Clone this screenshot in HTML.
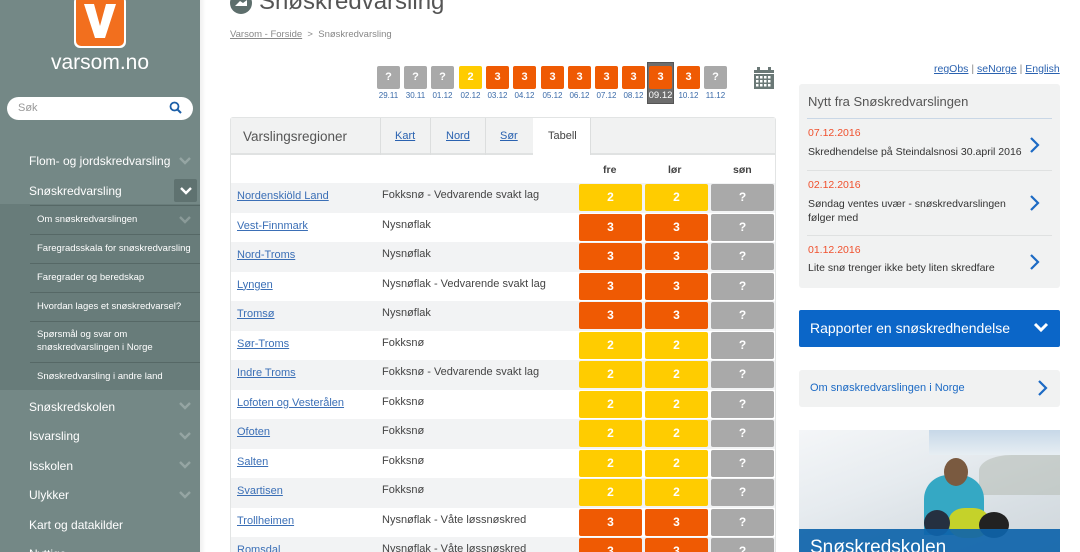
<!DOCTYPE html>
<html style="overflow:hidden;width:1080px;height:552px"><head><meta charset="utf-8">
<style>
*{box-sizing:border-box;margin:0;padding:0}
html,body{overflow:hidden}
body{width:1080px;height:552px;background:#fff;font-family:"Liberation Sans",sans-serif;position:relative;color:#333}
.a{position:absolute}
#side{left:0;top:0;width:200px;height:552px;background:#748886;}
.nav{position:absolute;left:29px;color:#fff;font-size:12px}
.chev{position:absolute;left:178px;width:14px;height:10px}
.sub{position:absolute;left:37px;color:#fff;font-size:9.5px;line-height:13px}
.subl{position:absolute;left:30px;width:170px;height:1px;background:#566866}
.db{position:absolute;top:66px;width:23px;height:23px;border-radius:2px;color:#fff;font-weight:bold;font-size:11px;text-align:center;line-height:23px}
.dl{position:absolute;top:91px;font-size:8px;color:#3a6aa8;width:27px;text-align:center}
.g{background:#a9a9a9}.y{background:#ffcc00}.o{background:#ef5a03}
.row{position:absolute;left:231px;width:544px;height:29.5px}
.row .r{position:absolute;left:6px;top:7px;font-size:11px;color:#3b6fb6;text-decoration:underline}
.row .p{position:absolute;left:151px;top:6px;font-size:11px;color:#444}
.row .c{position:absolute;top:1px;width:63px;height:27px;border-radius:2px;color:#fff;font-weight:bold;font-size:12px;text-align:center;line-height:27px}
.news{position:absolute;left:808px;font-size:10.5px;color:#333}
.nd{color:#f0502d}
</style></head><body>
<div id="side" class="a">
  <div class="a" style="left:74px;top:-4px;width:52px;height:52px;background:#fff;border-radius:6px"></div>
  <div class="a" style="left:76px;top:-4px;width:48px;height:50px;background:#f26f1e;border-radius:5px"></div>
  <svg class="a" style="left:82px;top:2px" width="36" height="38" viewBox="0 0 36 38"><path d="M2 2h10l6 22 6-22h10L23 36h-10z" fill="#fff"/></svg>
  <div class="a" style="left:0;width:200px;top:51px;text-align:center;color:#fff;font-size:21px">varsom.no</div>
  <div class="a" style="left:7px;top:97px;width:186px;height:23px;background:#fff;border-radius:12px"></div>
  <div class="a" style="left:18px;top:102px;font-size:11px;color:#999">Søk</div>
  <svg class="a" style="left:169px;top:101px" width="13" height="13" viewBox="0 0 13 13"><circle cx="5.5" cy="5.5" r="4" fill="none" stroke="#1c5fa8" stroke-width="1.8"/><path d="M8.5 8.5l3.5 3.5" stroke="#1c5fa8" stroke-width="2"/></svg>
  <div class="nav" style="top:154px">Flom- og jordskredvarsling</div>
  <svg class="chev" style="top:156px" viewBox="0 0 14 10"><path d="M2 2l5 5 5-5" stroke="#95a5a3" stroke-width="2.4" fill="none"/></svg>
  <div class="nav" style="top:184px">Snøskredvarsling</div>
  <div class="a" style="left:174px;top:179px;width:23px;height:23px;background:#5f7270;border-radius:2px"></div>
  <svg class="chev" style="top:186px;left:179px" viewBox="0 0 14 10"><path d="M2 2l5 5 5-5" stroke="#fff" stroke-width="2.4" fill="none"/></svg>
  <div class="a" style="left:0;top:204px;width:200px;height:186px;background:#687c7a"></div>
  <div class="subl" style="top:205px"></div>
  <div class="sub" style="top:213px">Om snøskredvarslingen</div>
  <svg class="chev" style="top:215px" viewBox="0 0 14 10"><path d="M2 2l5 5 5-5" stroke="#8a9a98" stroke-width="2.4" fill="none"/></svg>
  <div class="subl" style="top:234px"></div>
  <div class="sub" style="top:242px">Faregradsskala for snøskredvarsling</div>
  <div class="subl" style="top:263px"></div>
  <div class="sub" style="top:271px">Faregrader og beredskap</div>
  <div class="subl" style="top:292px"></div>
  <div class="sub" style="top:300px">Hvordan lages et snøskredvarsel?</div>
  <div class="subl" style="top:321px"></div>
  <div class="sub" style="top:328px">Spørsmål og svar om<br>snøskredvarslingen i Norge</div>
  <div class="subl" style="top:362px"></div>
  <div class="sub" style="top:370px">Snøskredvarsling i andre land</div>
  <div class="nav" style="top:400px">Snøskredskolen</div>
  <svg class="chev" style="top:401px" viewBox="0 0 14 10"><path d="M2 2l5 5 5-5" stroke="#95a5a3" stroke-width="2.4" fill="none"/></svg>
  <div class="nav" style="top:429px">Isvarsling</div>
  <svg class="chev" style="top:431px" viewBox="0 0 14 10"><path d="M2 2l5 5 5-5" stroke="#95a5a3" stroke-width="2.4" fill="none"/></svg>
  <div class="nav" style="top:459px">Isskolen</div>
  <svg class="chev" style="top:460px" viewBox="0 0 14 10"><path d="M2 2l5 5 5-5" stroke="#95a5a3" stroke-width="2.4" fill="none"/></svg>
  <div class="nav" style="top:488px">Ulykker</div>
  <svg class="chev" style="top:490px" viewBox="0 0 14 10"><path d="M2 2l5 5 5-5" stroke="#95a5a3" stroke-width="2.4" fill="none"/></svg>
  <div class="nav" style="top:518px">Kart og datakilder</div>
  <div class="nav" style="top:547px">Nyttige</div>
</div>
<div class="a" style="left:200px;top:0;width:6px;height:552px;background:linear-gradient(to right,rgba(0,0,0,.06),rgba(0,0,0,0))"></div>

<svg class="a" style="left:230px;top:-8px" width="22" height="22" viewBox="0 0 22 22"><circle cx="11" cy="11" r="11" fill="#5d6e6c"/><path d="M5 14l5-5 3 2 4-3v6z" fill="#fff"/></svg>
<div class="a" style="left:259px;top:-12px;font-size:24px;color:#555">Snøskredvarsling</div>
<div class="a" style="left:230px;top:29px;font-size:9.5px;color:#888"><span style="text-decoration:underline">Varsom - Forside</span> &nbsp;&gt;&nbsp; Snøskredvarsling</div>

<div class="a" style="left:647px;top:62px;width:27px;height:42px;background:#6d6d6d;border:1px solid #555"></div>
<div class="db g" style="left:377px">?</div><div class="dl" style="left:375px">29.11</div>
<div class="db g" style="left:404px">?</div><div class="dl" style="left:402px">30.11</div>
<div class="db g" style="left:431px">?</div><div class="dl" style="left:429px">01.12</div>
<div class="db y" style="left:459px">2</div><div class="dl" style="left:457px">02.12</div>
<div class="db o" style="left:486px">3</div><div class="dl" style="left:484px">03.12</div>
<div class="db o" style="left:513px">3</div><div class="dl" style="left:511px">04.12</div>
<div class="db o" style="left:541px">3</div><div class="dl" style="left:539px">05.12</div>
<div class="db o" style="left:568px">3</div><div class="dl" style="left:566px">06.12</div>
<div class="db o" style="left:595px">3</div><div class="dl" style="left:593px">07.12</div>
<div class="db o" style="left:622px">3</div><div class="dl" style="left:620px">08.12</div>
<div class="db o" style="left:649px">3</div><div class="dl" style="left:647px;color:#fff;font-size:9.5px;top:90px">09.12</div>
<div class="db o" style="left:677px">3</div><div class="dl" style="left:675px">10.12</div>
<div class="db g" style="left:704px">?</div><div class="dl" style="left:702px">11.12</div>
<svg class="a" style="left:754px;top:67px" width="20" height="22" viewBox="0 0 20 22"><rect x="0" y="3" width="20" height="19" fill="#6a7876"/><rect x="3" y="0" width="3" height="5" fill="#6a7876"/><rect x="14" y="0" width="3" height="5" fill="#6a7876"/><rect x="0" y="6" width="20" height="1" fill="#fff"/><g fill="#fff"><rect x="2" y="9" width="2.5" height="2.5"/><rect x="6" y="9" width="2.5" height="2.5"/><rect x="10" y="9" width="2.5" height="2.5"/><rect x="14" y="9" width="2.5" height="2.5"/><rect x="2" y="13" width="2.5" height="2.5"/><rect x="6" y="13" width="2.5" height="2.5"/><rect x="10" y="13" width="2.5" height="2.5"/><rect x="14" y="13" width="2.5" height="2.5"/><rect x="2" y="17" width="2.5" height="2.5"/><rect x="6" y="17" width="2.5" height="2.5"/><rect x="10" y="17" width="2.5" height="2.5"/><rect x="14" y="17" width="2.5" height="2.5"/></g></svg>

<div class="a" style="left:230px;top:117px;width:546px;height:435px;border:1px solid #e2e4e4;border-bottom:none;border-radius:3px 3px 0 0"></div>
<div class="a" style="left:231px;top:118px;width:544px;height:37px;background:#f1f2f2;border-bottom:2px solid #e0e2e2"></div>
<div class="a" style="left:243px;top:129px;font-size:13.5px;color:#555">Varslingsregioner</div>
<div class="a" style="left:380px;top:118px;width:1px;height:37px;background:#dcdede"></div>
<div class="a" style="left:430px;top:118px;width:1px;height:37px;background:#dcdede"></div>
<div class="a" style="left:485px;top:118px;width:1px;height:37px;background:#dcdede"></div>
<div class="a" style="left:533px;top:118px;width:57px;height:37px;background:#fff"></div>
<div class="a" style="left:590px;top:118px;width:1px;height:37px;background:#dcdede"></div>
<div class="a" style="left:395px;top:130px;font-size:11px;color:#2a62b0;text-decoration:underline">Kart</div>
<div class="a" style="left:446px;top:130px;font-size:11px;color:#2a62b0;text-decoration:underline">Nord</div>
<div class="a" style="left:500px;top:130px;font-size:11px;color:#2a62b0;text-decoration:underline">Sør</div>
<div class="a" style="left:548px;top:130px;font-size:11px;color:#444">Tabell</div>
<div class="a" style="left:603px;top:164px;font-size:10.5px;font-weight:bold;color:#444">fre</div>
<div class="a" style="left:668px;top:164px;font-size:10.5px;font-weight:bold;color:#444">lør</div>
<div class="a" style="left:733px;top:164px;font-size:10.5px;font-weight:bold;color:#444">søn</div>

<div class="row" style="top:183px;background:#f2f3f4"><span class="r">Nordenskiöld Land</span><span class="p">Fokksnø - Vedvarende svakt lag</span><div class="c y" style="left:348px">2</div><div class="c y" style="left:414px">2</div><div class="c g" style="left:480px">?</div></div>
<div class="row" style="top:212.5px"><span class="r">Vest-Finnmark</span><span class="p">Nysnøflak</span><div class="c o" style="left:348px">3</div><div class="c o" style="left:414px">3</div><div class="c g" style="left:480px">?</div></div>
<div class="row" style="top:242px;background:#f2f3f4"><span class="r">Nord-Troms</span><span class="p">Nysnøflak</span><div class="c o" style="left:348px">3</div><div class="c o" style="left:414px">3</div><div class="c g" style="left:480px">?</div></div>
<div class="row" style="top:271.5px"><span class="r">Lyngen</span><span class="p">Nysnøflak - Vedvarende svakt lag</span><div class="c o" style="left:348px">3</div><div class="c o" style="left:414px">3</div><div class="c g" style="left:480px">?</div></div>
<div class="row" style="top:301px;background:#f2f3f4"><span class="r">Tromsø</span><span class="p">Nysnøflak</span><div class="c o" style="left:348px">3</div><div class="c o" style="left:414px">3</div><div class="c g" style="left:480px">?</div></div>
<div class="row" style="top:330.5px"><span class="r">Sør-Troms</span><span class="p">Fokksnø</span><div class="c y" style="left:348px">2</div><div class="c y" style="left:414px">2</div><div class="c g" style="left:480px">?</div></div>
<div class="row" style="top:360px;background:#f2f3f4"><span class="r">Indre Troms</span><span class="p">Fokksnø - Vedvarende svakt lag</span><div class="c y" style="left:348px">2</div><div class="c y" style="left:414px">2</div><div class="c g" style="left:480px">?</div></div>
<div class="row" style="top:389.5px"><span class="r">Lofoten og Vesterålen</span><span class="p">Fokksnø</span><div class="c y" style="left:348px">2</div><div class="c y" style="left:414px">2</div><div class="c g" style="left:480px">?</div></div>
<div class="row" style="top:419px;background:#f2f3f4"><span class="r">Ofoten</span><span class="p">Fokksnø</span><div class="c y" style="left:348px">2</div><div class="c y" style="left:414px">2</div><div class="c g" style="left:480px">?</div></div>
<div class="row" style="top:448.5px"><span class="r">Salten</span><span class="p">Fokksnø</span><div class="c y" style="left:348px">2</div><div class="c y" style="left:414px">2</div><div class="c g" style="left:480px">?</div></div>
<div class="row" style="top:478px;background:#f2f3f4"><span class="r">Svartisen</span><span class="p">Fokksnø</span><div class="c y" style="left:348px">2</div><div class="c y" style="left:414px">2</div><div class="c g" style="left:480px">?</div></div>
<div class="row" style="top:507.5px"><span class="r">Trollheimen</span><span class="p">Nysnøflak - Våte løssnøskred</span><div class="c o" style="left:348px">3</div><div class="c o" style="left:414px">3</div><div class="c g" style="left:480px">?</div></div>
<div class="row" style="top:537px;height:15px;overflow:hidden;background:#f2f3f4"><span class="r">Romsdal</span><span class="p">Nysnøflak - Våte løssnøskred</span><div class="c o" style="left:348px">3</div><div class="c o" style="left:414px">3</div><div class="c g" style="left:480px">?</div></div>

<div class="a" style="left:934px;top:63px;font-size:10.5px;color:#2a62b0"><u>regObs</u> <span style="color:#888">|</span> <u>seNorge</u> <span style="color:#888">|</span> <u>English</u></div>
<div class="a" style="left:799px;top:84px;width:261px;height:204px;background:#f1f2f2;border-radius:3px"></div>
<div class="a" style="left:808px;top:94px;font-size:13px;color:#555">Nytt fra Snøskredvarslingen</div>
<div class="a" style="left:807px;top:118px;width:245px;height:1px;background:#c9d7e6"></div>
<div class="news nd" style="top:127px">07.12.2016</div>
<div class="news" style="top:146px">Skredhendelse på Steindalsnosi 30.april 2016</div>
<div class="a" style="left:807px;top:170px;width:245px;height:1px;background:#dfe1e1"></div>
<div class="news nd" style="top:179px">02.12.2016</div>
<div class="news" style="top:197px;line-height:14px">Søndag ventes uvær - snøskredvarslingen<br>følger med</div>
<div class="a" style="left:807px;top:235px;width:245px;height:1px;background:#dfe1e1"></div>
<div class="news nd" style="top:244px">01.12.2016</div>
<div class="news" style="top:262px">Lite snø trenger ikke bety liten skredfare</div>
<svg class="a" style="left:1029px;top:136px" width="12" height="18" viewBox="0 0 12 18"><path d="M2 2l7 7-7 7" stroke="#1c6ac4" stroke-width="2.2" fill="none"/></svg>
<svg class="a" style="left:1029px;top:194px" width="12" height="18" viewBox="0 0 12 18"><path d="M2 2l7 7-7 7" stroke="#1c6ac4" stroke-width="2.2" fill="none"/></svg>
<svg class="a" style="left:1029px;top:253px" width="12" height="18" viewBox="0 0 12 18"><path d="M2 2l7 7-7 7" stroke="#1c6ac4" stroke-width="2.2" fill="none"/></svg>

<div class="a" style="left:799px;top:310px;width:261px;height:37px;background:#0b66c8;border-radius:2px"></div>
<div class="a" style="left:810px;top:320px;font-size:14px;color:#fff">Rapporter en snøskredhendelse</div>
<svg class="a" style="left:1033px;top:322px" width="16" height="12" viewBox="0 0 16 12"><path d="M2 2l6 6 6-6" stroke="#fff" stroke-width="3" fill="none"/></svg>

<div class="a" style="left:799px;top:370px;width:261px;height:37px;background:#f1f2f2;border-radius:3px"></div>
<div class="a" style="left:810px;top:382px;font-size:11px;color:#1c6ac4">Om snøskredvarslingen i Norge</div>
<svg class="a" style="left:1037px;top:379px" width="12" height="18" viewBox="0 0 12 18"><path d="M2 2l7 7-7 7" stroke="#1c6ac4" stroke-width="2.2" fill="none"/></svg>

<div class="a" style="left:799px;top:430px;width:261px;height:122px;background:linear-gradient(160deg,#f4f6f8 0%,#e6ebef 40%,#d8dfe4 70%,#cfd6da 100%);overflow:hidden">
  <div class="a" style="left:130px;top:0;width:131px;height:25px;background:linear-gradient(#c7d8e8,#e7eef3)"></div>
  <div class="a" style="left:180px;top:25px;width:81px;height:40px;background:#b7beb8;opacity:.6;border-radius:40% 0 0 0"></div>
  <div class="a" style="left:125px;top:45px;width:60px;height:60px;background:#35a8c4;border-radius:40% 40% 0 0"></div>
  <div class="a" style="left:145px;top:28px;width:24px;height:28px;background:#7a5a40;border-radius:50%"></div>
  <div class="a" style="left:150px;top:78px;width:40px;height:30px;background:#c5d22a;border-radius:40%"></div>
  <div class="a" style="left:125px;top:80px;width:26px;height:26px;background:#253040;border-radius:50%"></div>
  <div class="a" style="left:180px;top:82px;width:30px;height:26px;background:#222;border-radius:50%"></div>
  <div class="a" style="left:0;top:99px;width:261px;height:23px;background:rgba(14,100,170,.92)"></div>
  <div class="a" style="left:11px;top:107px;font-size:19px;color:#fff">Snøskredskolen</div>
</div>
</body></html>
